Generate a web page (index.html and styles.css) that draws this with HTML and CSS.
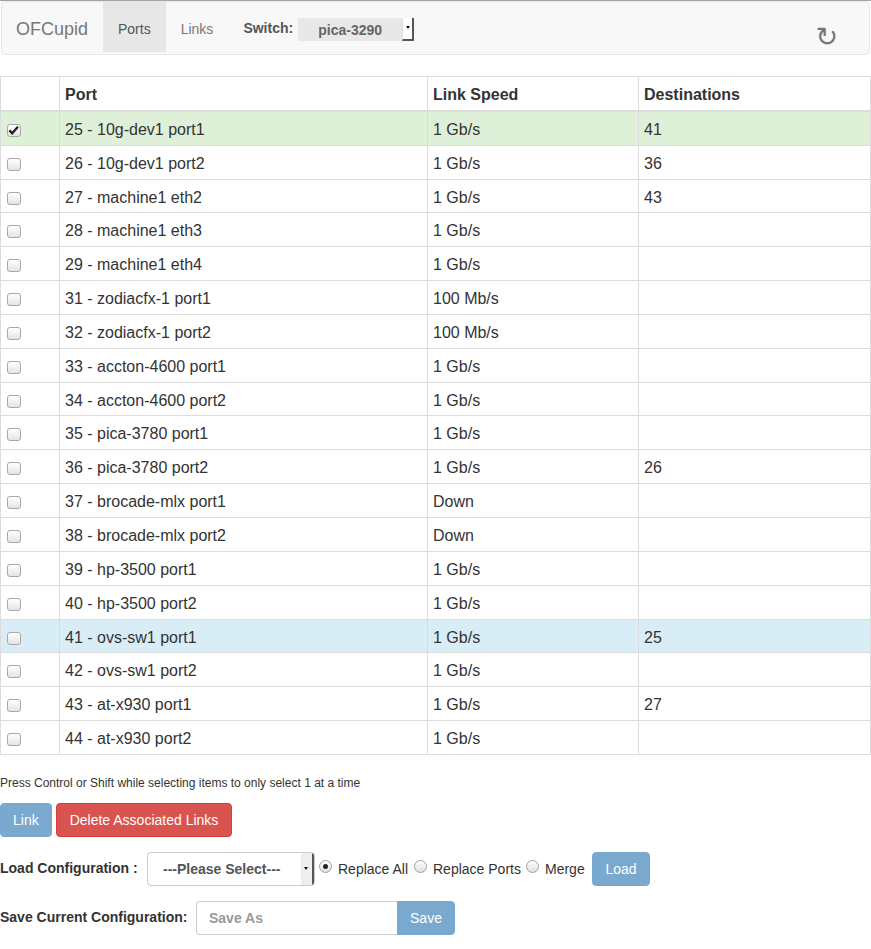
FILE: index.html
```html
<!DOCTYPE html>
<html>
<head>
<meta charset="utf-8">
<title>OFCupid</title>
<link rel="stylesheet" href="styles.css">
</head>
<body>
<div class="page">
  <nav class="navbar">
    <div class="brand">OFCupid</div>
    <div class="nav-item active">Ports</div>
    <div class="nav-item">Links</div>
    <div class="switch">
      <span class="switch-label">Switch:</span>
      <span class="nav-select"><span class="nav-select-value">pica-3290</span><span class="arrow-box"><span class="tri"></span></span></span>
    </div>
    <div class="refresh">↻</div>
  </nav>

  <table class="ports">
    <colgroup>
      <col class="c1"><col class="c2"><col class="c3"><col class="c4">
    </colgroup>
    <thead>
      <tr><th></th><th>Port</th><th>Link Speed</th><th>Destinations</th></tr>
    </thead>
    <tbody>
      <tr class="success"><td><span class="cb checked"><svg viewBox="0 0 13 13" width="13" height="13"><path d="M2.4 6.4 L5.2 9.3 L11 2.8" fill="none" stroke="#222" stroke-width="2.4"/></svg></span></td><td>25 - 10g-dev1 port1</td><td>1 Gb/s</td><td>41</td></tr>
      <tr><td><span class="cb"></span></td><td>26 - 10g-dev1 port2</td><td>1 Gb/s</td><td>36</td></tr>
      <tr><td><span class="cb"></span></td><td>27 - machine1 eth2</td><td>1 Gb/s</td><td>43</td></tr>
      <tr><td><span class="cb"></span></td><td>28 - machine1 eth3</td><td>1 Gb/s</td><td></td></tr>
      <tr><td><span class="cb"></span></td><td>29 - machine1 eth4</td><td>1 Gb/s</td><td></td></tr>
      <tr><td><span class="cb"></span></td><td>31 - zodiacfx-1 port1</td><td>100 Mb/s</td><td></td></tr>
      <tr><td><span class="cb"></span></td><td>32 - zodiacfx-1 port2</td><td>100 Mb/s</td><td></td></tr>
      <tr><td><span class="cb"></span></td><td>33 - accton-4600 port1</td><td>1 Gb/s</td><td></td></tr>
      <tr><td><span class="cb"></span></td><td>34 - accton-4600 port2</td><td>1 Gb/s</td><td></td></tr>
      <tr><td><span class="cb"></span></td><td>35 - pica-3780 port1</td><td>1 Gb/s</td><td></td></tr>
      <tr><td><span class="cb"></span></td><td>36 - pica-3780 port2</td><td>1 Gb/s</td><td>26</td></tr>
      <tr><td><span class="cb"></span></td><td>37 - brocade-mlx port1</td><td>Down</td><td></td></tr>
      <tr><td><span class="cb"></span></td><td>38 - brocade-mlx port2</td><td>Down</td><td></td></tr>
      <tr><td><span class="cb"></span></td><td>39 - hp-3500 port1</td><td>1 Gb/s</td><td></td></tr>
      <tr><td><span class="cb"></span></td><td>40 - hp-3500 port2</td><td>1 Gb/s</td><td></td></tr>
      <tr class="info"><td><span class="cb"></span></td><td>41 - ovs-sw1 port1</td><td>1 Gb/s</td><td>25</td></tr>
      <tr><td><span class="cb"></span></td><td>42 - ovs-sw1 port2</td><td>1 Gb/s</td><td></td></tr>
      <tr><td><span class="cb"></span></td><td>43 - at-x930 port1</td><td>1 Gb/s</td><td>27</td></tr>
      <tr><td><span class="cb"></span></td><td>44 - at-x930 port2</td><td>1 Gb/s</td><td></td></tr>
    </tbody>
  </table>

  <p class="help">Press Control or Shift while selecting items to only select 1 at a time</p>

  <div class="actions">
    <button class="btn btn-primary disabled">Link</button>
    <button class="btn btn-danger">Delete Associated Links</button>
  </div>

  <div class="form-row load-row">
    <span class="form-label load-label">Load Configuration :</span>
    <span class="fake-select"><span class="fake-select-value">---Please Select---</span><span class="arrow-box big"><span class="tri"></span></span></span>
    <span class="radio checked"></span><span class="radio-label rl-all">Replace All</span>
    <span class="radio"></span><span class="radio-label rl-ports">Replace Ports</span>
    <span class="radio"></span><span class="radio-label rl-merge">Merge</span>
    <button class="btn btn-primary disabled load-btn">Load</button>
  </div>

  <div class="form-row save-row">
    <span class="form-label save-label">Save Current Configuration:</span>
    <span class="input-group">
      <input class="save-input" type="text" placeholder="Save As">
      <button class="btn btn-primary disabled save-btn">Save</button>
    </span>
  </div>
</div>
</body>
</html>
```

FILE: styles.css
```css
* { box-sizing: border-box; }

html, body {
  margin: 0;
  padding: 0;
  background: #fff;
}

body {
  font-family: "Liberation Sans", Arial, Helvetica, sans-serif;
  font-size: 14px;
  line-height: 1.42857;
  color: #333;
}

.page {
  border-top: 1px solid #a4a4a4;
}

/* Navbar */
.navbar {
  display: flex;
  align-items: stretch;
  height: 54px;
  margin: 0 1px 21px 1px;
  background: #f8f8f8;
  border: 1px solid #e7e7e7;
  border-radius: 4px;
}

.brand {
  width: 101px;
  padding-left: 14px;
  padding-top: 2px;
  font-size: 18px;
  color: #777;
  line-height: 50px;
  height: 50px;
}

.nav-item {
  padding: 2px 15px 0 15px;
  height: 50px;
  line-height: 50px;
  color: #777;
}

.nav-item.active {
  background: #e7e7e7;
  color: #555;
}

.switch {
  display: flex;
  align-items: center;
  height: 52px;
  margin-left: 15px;
}

.switch-label {
  font-weight: bold;
  color: #555;
  margin-right: 5px;
  padding-top: 2px;
}

.nav-select {
  display: flex;
  align-items: stretch;
  height: 23px;
  margin-top: 2px;
}

.nav-select-value {
  width: 104px;
  background: #e8e8e8;
  font-weight: bold;
  color: #666;
  text-align: center;
  line-height: 24px;
}

.arrow-box {
  position: relative;
  width: 12px;
  background: #fff;
  border-right: 2px solid #555;
  border-bottom: 2px solid #555;
  border-left: 1px solid #ddd;
}

.tri {
  position: absolute;
  left: 3px;
  top: 8px;
  width: 0;
  height: 0;
  border-left: 2.5px solid transparent;
  border-right: 2.5px solid transparent;
  border-top: 3px solid #111;
}

.refresh {
  margin-left: auto;
  margin-right: 31px;
  font-family: "DejaVu Sans", sans-serif;
  font-size: 27px;
  color: #777;
  line-height: 1;
  padding-top: 21px;
}

/* Table */
.ports {
  width: 100%;
  border-collapse: collapse;
  border: 1px solid #ddd;
  font-size: 16px;
  margin-bottom: 20px;
}

.ports col.c1 { width: 59px; }
.ports col.c2 { width: 368px; }
.ports col.c3 { width: 211px; }
.ports col.c4 { width: auto; }

.ports th,
.ports td {
  border: 1px solid #ddd;
  padding: 7px 5px 3px 5px;
  text-align: left;
  vertical-align: top;
  line-height: 1.42857;
}

.ports th {
  font-weight: bold;
  border-bottom: 2px solid #ddd;
}

.ports tr.success td { background: #dff0d8; }
.ports tr.info td { background: #d9edf7; }

.cb {
  display: block;
  width: 14px;
  height: 13px;
  margin: 5px 0 0 1px;
  border: 1px solid #a8a8a8;
  border-radius: 3px;
  background: linear-gradient(#ffffff, #e4e4e4);
  position: relative;
}

.cb svg {
  position: absolute;
  left: -1px;
  top: -1px;
}

/* Bottom */
.help {
  font-size: 12px;
  margin: 0 0 11px 0;
  line-height: 17px;
}

.actions {
  display: flex;
  gap: 4px;
  margin-bottom: 15px;
}

.btn {
  font-family: "Liberation Sans", Arial, Helvetica, sans-serif;
  font-size: 14px;
  line-height: 20px;
  padding: 6px 12px;
  border: 1px solid transparent;
  border-radius: 4px;
  color: #fff;
  height: 34px;
  cursor: pointer;
  white-space: nowrap;
}

.btn-primary.disabled {
  background: #7aa9d0;
  border-color: #7aa7cf;
}

.btn-danger {
  background: #d9534f;
  border-color: #d43f3a;
  padding: 6px 13px;
}

.form-row {
  display: flex;
  align-items: center;
  height: 34px;
  white-space: nowrap;
}

.load-row { margin-bottom: 15px; }

.form-label {
  font-weight: bold;
  flex: none;
}

.load-label { width: 147px; }
.save-label { width: 196px; }

.fake-select {
  display: flex;
  flex: none;
  width: 168px;
  height: 34px;
  border: 1px solid #ccc;
  border-radius: 4px;
  background: #fff;
  overflow: hidden;
}

.fake-select-value {
  flex: 1;
  padding-left: 15px;
  line-height: 32px;
  font-weight: bold;
  color: #555;
}

.arrow-box.big {
  width: 13px;
  background: #eee;
  border-left: none;
  border-bottom: none;
  border-right: 2px solid #555;
}

.arrow-box.big .tri {
  top: 14px;
  left: 3px;
}

.radio {
  display: inline-block;
  flex: none;
  width: 13px;
  height: 13px;
  border: 1px solid #a0a0a0;
  border-radius: 50%;
  background: linear-gradient(#ffffff, #e0e0e0);
  margin: 0 6px 0 4px;
  position: relative;
  top: -2px;
}

.radio.checked::after {
  content: "";
  position: absolute;
  left: 3px;
  top: 3px;
  width: 5px;
  height: 5px;
  border-radius: 50%;
  background: #222;
}

.radio-label {
  flex: none;
  padding-top: 2px;
}

.rl-all { width: 72px; }
.rl-ports { width: 89px; }
.rl-merge { width: 43px; }

.load-btn {
  margin-left: 4px;
  width: 58px;
  padding: 6px 0;
}

.input-group {
  display: flex;
}

.save-input {
  width: 201px;
  height: 34px;
  padding: 6px 12px;
  border: 1px solid #ccc;
  border-right: none;
  border-radius: 4px 0 0 4px;
  font-family: "Liberation Sans", Arial, Helvetica, sans-serif;
  font-size: 14px;
  font-weight: bold;
  color: #555;
  outline: none;
}

.save-input::placeholder {
  color: #999;
  font-weight: bold;
}

.save-btn {
  border-radius: 0 4px 4px 0;
  width: 58px;
  padding: 6px 0;
}
```
